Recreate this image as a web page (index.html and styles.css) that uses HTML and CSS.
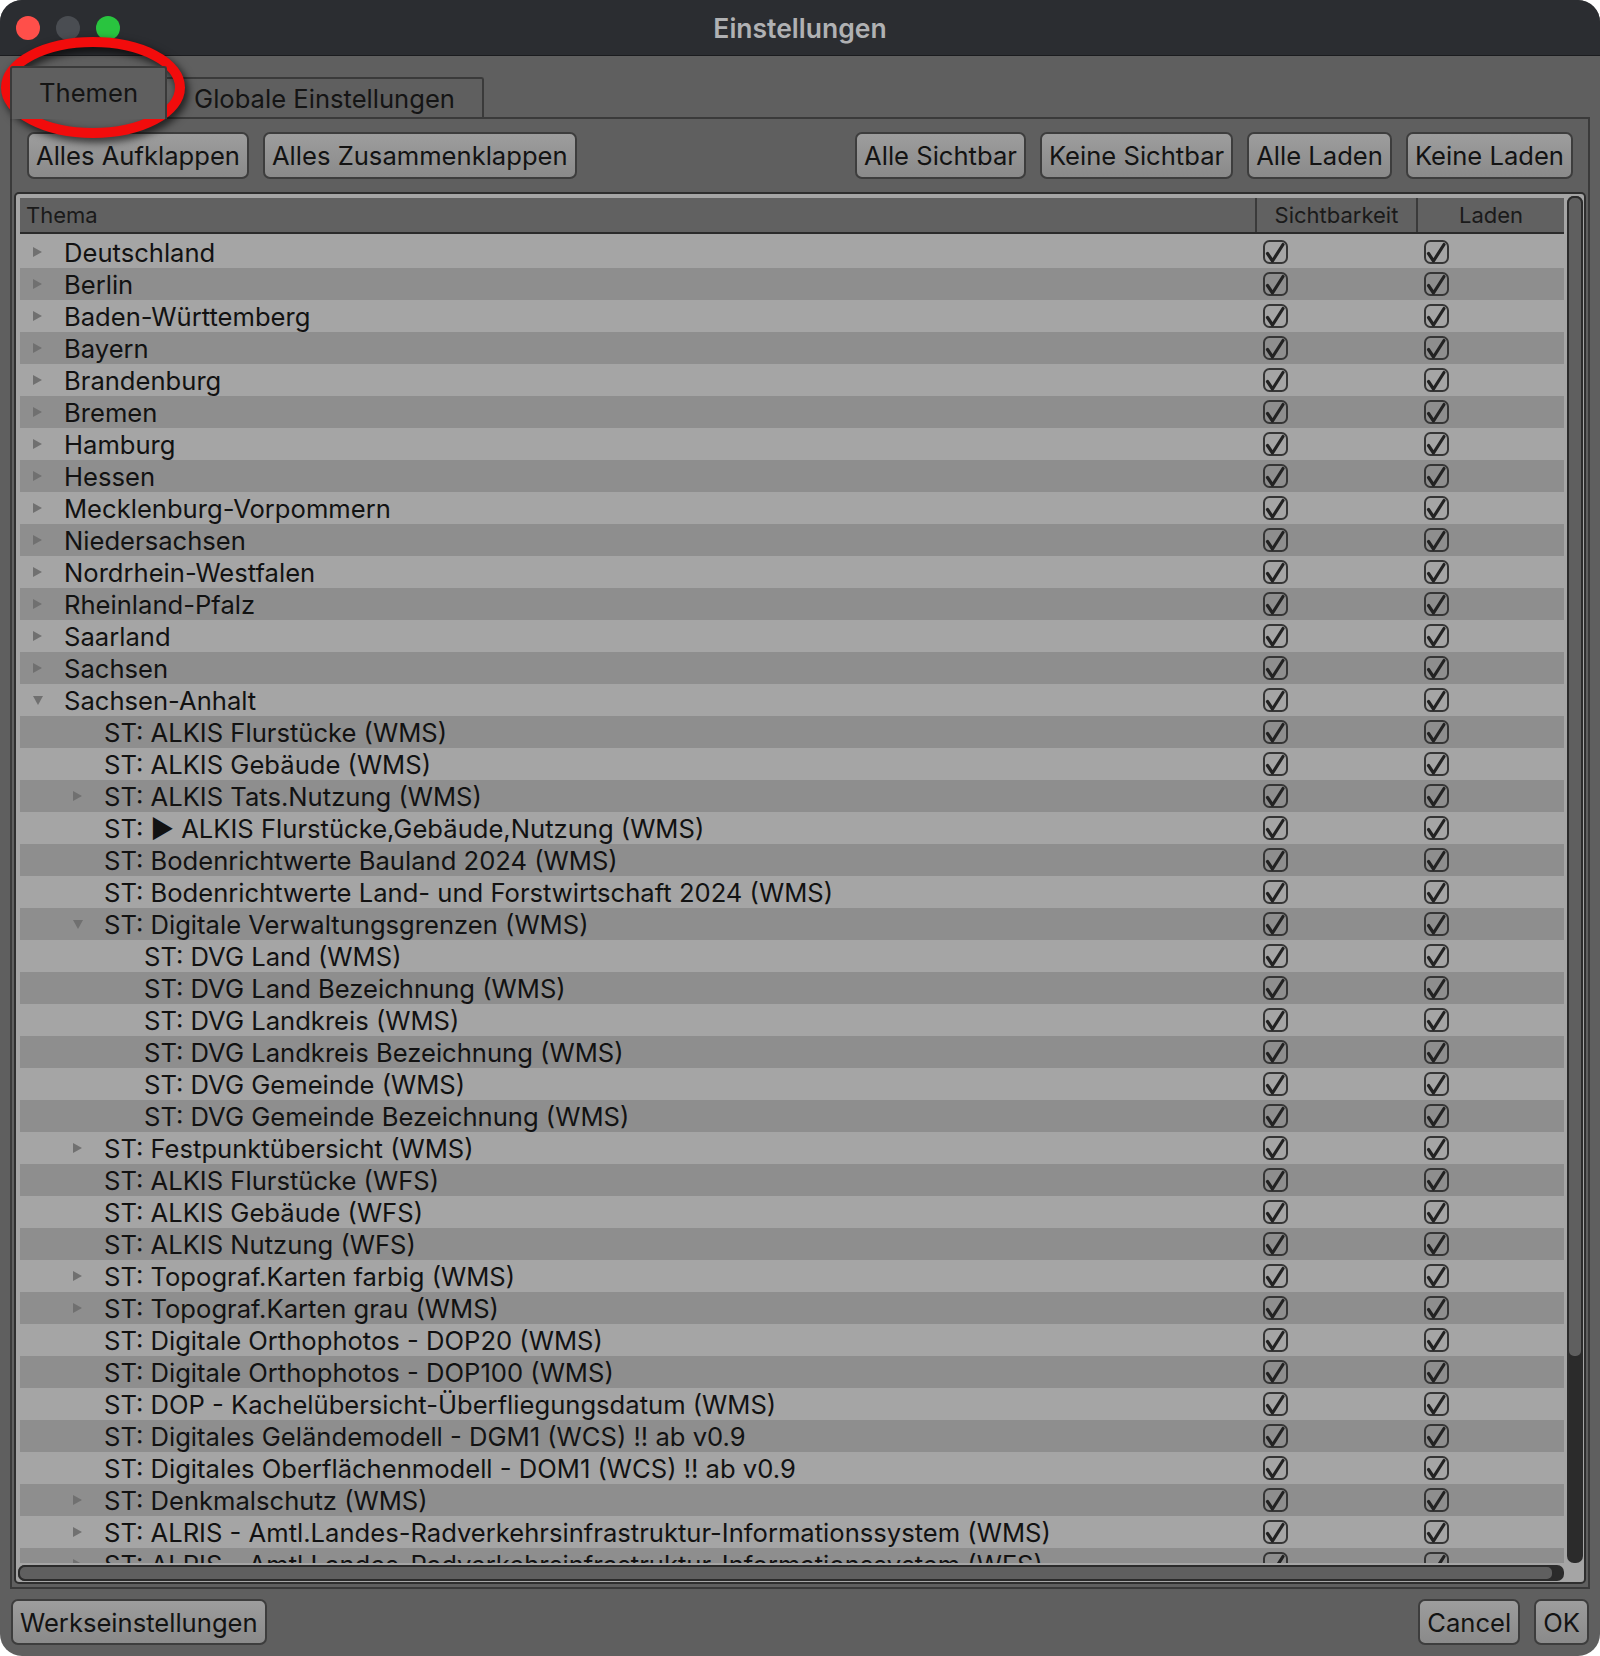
FILE: index.html
```html
<!DOCTYPE html>
<html lang="de">
<head>
    <meta charset="UTF-8">
    <title>Einstellungen</title>
    <link rel="stylesheet" href="styles.css">
</head>
<body>
    <svg width="0" height="0" class="defs">
        <symbol id="chk" viewBox="0 0 25 24">
            <rect x="1" y="1" width="23" height="22" rx="5.5" fill="none" stroke="#363636" stroke-width="2"/>
            <polyline points="4.5,13.5 9.5,21 20,4.5" fill="none" stroke="#222222" stroke-width="3.2" stroke-linecap="round" stroke-linejoin="round"/>
        </symbol>
    </svg>

    <div class="window">
        <div class="titlebar">
            <div class="lights">
                <span class="light red"></span>
                <span class="light grey"></span>
                <span class="light green"></span>
            </div>
            <div class="title">Einstellungen</div>
            <div></div>
        </div>

        <div class="tabbar">
            <div class="tab active">Themen</div>
            <div class="tab">Globale Einstellungen</div>
        </div>

        <div class="pane">
            <div class="toolbar">
                <div class="group">
                    <button class="btn">Alles Aufklappen</button>
                    <button class="btn">Alles Zusammenklappen</button>
                </div>
                <div class="group">
                    <button class="btn">Alle Sichtbar</button>
                    <button class="btn">Keine Sichtbar</button>
                    <button class="btn">Alle Laden</button>
                    <button class="btn">Keine Laden</button>
                </div>
            </div>

            <div class="tree-frame">
                <div class="tree">
                    <div class="tree-head">
                        <div class="head-name">Thema</div>
                        <div class="head-col">Sichtbarkeit</div>
                        <div class="head-col">Laden</div>
                    </div>
                    <div class="tree-body">
                        <div class="row"><div class="name lv0"><i class="tw closed"></i>Deutschland</div><div class="cell"><svg class="check"><use href="#chk"/></svg></div><div class="cell"><svg class="check"><use href="#chk"/></svg></div></div>
                        <div class="row"><div class="name lv0"><i class="tw closed"></i>Berlin</div><div class="cell"><svg class="check"><use href="#chk"/></svg></div><div class="cell"><svg class="check"><use href="#chk"/></svg></div></div>
                        <div class="row"><div class="name lv0"><i class="tw closed"></i>Baden-Württemberg</div><div class="cell"><svg class="check"><use href="#chk"/></svg></div><div class="cell"><svg class="check"><use href="#chk"/></svg></div></div>
                        <div class="row"><div class="name lv0"><i class="tw closed"></i>Bayern</div><div class="cell"><svg class="check"><use href="#chk"/></svg></div><div class="cell"><svg class="check"><use href="#chk"/></svg></div></div>
                        <div class="row"><div class="name lv0"><i class="tw closed"></i>Brandenburg</div><div class="cell"><svg class="check"><use href="#chk"/></svg></div><div class="cell"><svg class="check"><use href="#chk"/></svg></div></div>
                        <div class="row"><div class="name lv0"><i class="tw closed"></i>Bremen</div><div class="cell"><svg class="check"><use href="#chk"/></svg></div><div class="cell"><svg class="check"><use href="#chk"/></svg></div></div>
                        <div class="row"><div class="name lv0"><i class="tw closed"></i>Hamburg</div><div class="cell"><svg class="check"><use href="#chk"/></svg></div><div class="cell"><svg class="check"><use href="#chk"/></svg></div></div>
                        <div class="row"><div class="name lv0"><i class="tw closed"></i>Hessen</div><div class="cell"><svg class="check"><use href="#chk"/></svg></div><div class="cell"><svg class="check"><use href="#chk"/></svg></div></div>
                        <div class="row"><div class="name lv0"><i class="tw closed"></i>Mecklenburg-Vorpommern</div><div class="cell"><svg class="check"><use href="#chk"/></svg></div><div class="cell"><svg class="check"><use href="#chk"/></svg></div></div>
                        <div class="row"><div class="name lv0"><i class="tw closed"></i>Niedersachsen</div><div class="cell"><svg class="check"><use href="#chk"/></svg></div><div class="cell"><svg class="check"><use href="#chk"/></svg></div></div>
                        <div class="row"><div class="name lv0"><i class="tw closed"></i>Nordrhein-Westfalen</div><div class="cell"><svg class="check"><use href="#chk"/></svg></div><div class="cell"><svg class="check"><use href="#chk"/></svg></div></div>
                        <div class="row"><div class="name lv0"><i class="tw closed"></i>Rheinland-Pfalz</div><div class="cell"><svg class="check"><use href="#chk"/></svg></div><div class="cell"><svg class="check"><use href="#chk"/></svg></div></div>
                        <div class="row"><div class="name lv0"><i class="tw closed"></i>Saarland</div><div class="cell"><svg class="check"><use href="#chk"/></svg></div><div class="cell"><svg class="check"><use href="#chk"/></svg></div></div>
                        <div class="row"><div class="name lv0"><i class="tw closed"></i>Sachsen</div><div class="cell"><svg class="check"><use href="#chk"/></svg></div><div class="cell"><svg class="check"><use href="#chk"/></svg></div></div>
                        <div class="row"><div class="name lv0"><i class="tw open"></i>Sachsen-Anhalt</div><div class="cell"><svg class="check"><use href="#chk"/></svg></div><div class="cell"><svg class="check"><use href="#chk"/></svg></div></div>
                        <div class="row"><div class="name lv1"><i class="tw"></i>ST: ALKIS Flurstücke (WMS)</div><div class="cell"><svg class="check"><use href="#chk"/></svg></div><div class="cell"><svg class="check"><use href="#chk"/></svg></div></div>
                        <div class="row"><div class="name lv1"><i class="tw"></i>ST: ALKIS Gebäude (WMS)</div><div class="cell"><svg class="check"><use href="#chk"/></svg></div><div class="cell"><svg class="check"><use href="#chk"/></svg></div></div>
                        <div class="row"><div class="name lv1"><i class="tw closed"></i>ST: ALKIS Tats.Nutzung (WMS)</div><div class="cell"><svg class="check"><use href="#chk"/></svg></div><div class="cell"><svg class="check"><use href="#chk"/></svg></div></div>
                        <div class="row"><div class="name lv1"><i class="tw"></i>ST: ▶ ALKIS Flurstücke,Gebäude,Nutzung (WMS)</div><div class="cell"><svg class="check"><use href="#chk"/></svg></div><div class="cell"><svg class="check"><use href="#chk"/></svg></div></div>
                        <div class="row"><div class="name lv1"><i class="tw"></i>ST: Bodenrichtwerte Bauland 2024 (WMS)</div><div class="cell"><svg class="check"><use href="#chk"/></svg></div><div class="cell"><svg class="check"><use href="#chk"/></svg></div></div>
                        <div class="row"><div class="name lv1"><i class="tw"></i>ST: Bodenrichtwerte Land- und Forstwirtschaft 2024 (WMS)</div><div class="cell"><svg class="check"><use href="#chk"/></svg></div><div class="cell"><svg class="check"><use href="#chk"/></svg></div></div>
                        <div class="row"><div class="name lv1"><i class="tw open"></i>ST: Digitale Verwaltungsgrenzen (WMS)</div><div class="cell"><svg class="check"><use href="#chk"/></svg></div><div class="cell"><svg class="check"><use href="#chk"/></svg></div></div>
                        <div class="row"><div class="name lv2"><i class="tw"></i>ST: DVG Land (WMS)</div><div class="cell"><svg class="check"><use href="#chk"/></svg></div><div class="cell"><svg class="check"><use href="#chk"/></svg></div></div>
                        <div class="row"><div class="name lv2"><i class="tw"></i>ST: DVG Land Bezeichnung (WMS)</div><div class="cell"><svg class="check"><use href="#chk"/></svg></div><div class="cell"><svg class="check"><use href="#chk"/></svg></div></div>
                        <div class="row"><div class="name lv2"><i class="tw"></i>ST: DVG Landkreis (WMS)</div><div class="cell"><svg class="check"><use href="#chk"/></svg></div><div class="cell"><svg class="check"><use href="#chk"/></svg></div></div>
                        <div class="row"><div class="name lv2"><i class="tw"></i>ST: DVG Landkreis Bezeichnung (WMS)</div><div class="cell"><svg class="check"><use href="#chk"/></svg></div><div class="cell"><svg class="check"><use href="#chk"/></svg></div></div>
                        <div class="row"><div class="name lv2"><i class="tw"></i>ST: DVG Gemeinde (WMS)</div><div class="cell"><svg class="check"><use href="#chk"/></svg></div><div class="cell"><svg class="check"><use href="#chk"/></svg></div></div>
                        <div class="row"><div class="name lv2"><i class="tw"></i>ST: DVG Gemeinde Bezeichnung (WMS)</div><div class="cell"><svg class="check"><use href="#chk"/></svg></div><div class="cell"><svg class="check"><use href="#chk"/></svg></div></div>
                        <div class="row"><div class="name lv1"><i class="tw closed"></i>ST: Festpunktübersicht (WMS)</div><div class="cell"><svg class="check"><use href="#chk"/></svg></div><div class="cell"><svg class="check"><use href="#chk"/></svg></div></div>
                        <div class="row"><div class="name lv1"><i class="tw"></i>ST: ALKIS Flurstücke (WFS)</div><div class="cell"><svg class="check"><use href="#chk"/></svg></div><div class="cell"><svg class="check"><use href="#chk"/></svg></div></div>
                        <div class="row"><div class="name lv1"><i class="tw"></i>ST: ALKIS Gebäude (WFS)</div><div class="cell"><svg class="check"><use href="#chk"/></svg></div><div class="cell"><svg class="check"><use href="#chk"/></svg></div></div>
                        <div class="row"><div class="name lv1"><i class="tw"></i>ST: ALKIS Nutzung (WFS)</div><div class="cell"><svg class="check"><use href="#chk"/></svg></div><div class="cell"><svg class="check"><use href="#chk"/></svg></div></div>
                        <div class="row"><div class="name lv1"><i class="tw closed"></i>ST: Topograf.Karten farbig (WMS)</div><div class="cell"><svg class="check"><use href="#chk"/></svg></div><div class="cell"><svg class="check"><use href="#chk"/></svg></div></div>
                        <div class="row"><div class="name lv1"><i class="tw closed"></i>ST: Topograf.Karten grau (WMS)</div><div class="cell"><svg class="check"><use href="#chk"/></svg></div><div class="cell"><svg class="check"><use href="#chk"/></svg></div></div>
                        <div class="row"><div class="name lv1"><i class="tw"></i>ST: Digitale Orthophotos - DOP20 (WMS)</div><div class="cell"><svg class="check"><use href="#chk"/></svg></div><div class="cell"><svg class="check"><use href="#chk"/></svg></div></div>
                        <div class="row"><div class="name lv1"><i class="tw"></i>ST: Digitale Orthophotos - DOP100 (WMS)</div><div class="cell"><svg class="check"><use href="#chk"/></svg></div><div class="cell"><svg class="check"><use href="#chk"/></svg></div></div>
                        <div class="row"><div class="name lv1"><i class="tw"></i>ST: DOP - Kachelübersicht-Überfliegungsdatum (WMS)</div><div class="cell"><svg class="check"><use href="#chk"/></svg></div><div class="cell"><svg class="check"><use href="#chk"/></svg></div></div>
                        <div class="row"><div class="name lv1"><i class="tw"></i>ST: Digitales Geländemodell - DGM1 (WCS) !! ab v0.9</div><div class="cell"><svg class="check"><use href="#chk"/></svg></div><div class="cell"><svg class="check"><use href="#chk"/></svg></div></div>
                        <div class="row"><div class="name lv1"><i class="tw"></i>ST: Digitales Oberflächenmodell - DOM1 (WCS) !! ab v0.9</div><div class="cell"><svg class="check"><use href="#chk"/></svg></div><div class="cell"><svg class="check"><use href="#chk"/></svg></div></div>
                        <div class="row"><div class="name lv1"><i class="tw closed"></i>ST: Denkmalschutz (WMS)</div><div class="cell"><svg class="check"><use href="#chk"/></svg></div><div class="cell"><svg class="check"><use href="#chk"/></svg></div></div>
                        <div class="row"><div class="name lv1"><i class="tw closed"></i>ST: ALRIS - Amtl.Landes-Radverkehrsinfrastruktur-Informationssystem (WMS)</div><div class="cell"><svg class="check"><use href="#chk"/></svg></div><div class="cell"><svg class="check"><use href="#chk"/></svg></div></div>
                        <div class="row"><div class="name lv1"><i class="tw closed"></i>ST: ALRIS - Amtl.Landes-Radverkehrsinfrastruktur-Informationssystem (WFS)</div><div class="cell"><svg class="check"><use href="#chk"/></svg></div><div class="cell"><svg class="check"><use href="#chk"/></svg></div></div>
                    </div>
                </div>
                <div class="vscroll"><div class="thumb"></div></div>
                <div class="hscroll"><div class="thumb"></div></div>
                <div class="corner"></div>
            </div>
        </div>

        <div class="footer">
            <button class="btn">Werkseinstellungen</button>
            <div class="group">
                <button class="btn">Cancel</button>
                <button class="btn">OK</button>
            </div>
        </div>

        <!-- red marker drawn over the first tab -->
        <svg class="marker" width="196" height="112" viewBox="0 0 196 112">
            <ellipse cx="93" cy="54.5" rx="87" ry="45.5" fill="none" stroke="#f20c0c" stroke-width="10"/>
        </svg>
    </div>
</body>
</html>
```

FILE: styles.css
```css
/* General reset */
* {
    margin: 0;
    padding: 0;
    box-sizing: border-box;
}

body {
    font-family: Inter, "Liberation Sans", sans-serif;
    background-color: #ffffff;
}

.defs {
    position: absolute;
}

/* Window */
.window {
    position: relative;
    width: 1600px;
    height: 1656px;
    background-color: #5f5f5f;
    border-radius: 22px;
    overflow: hidden;
    display: flex;
    flex-direction: column;
}

/* Title bar */
.titlebar {
    flex: none;
    height: 56px;
    background-color: #2b2d31;
    border-bottom: 1px solid #1b1c1f;
    display: grid;
    grid-template-columns: 1fr auto 1fr;
    align-items: center;
}

.lights {
    display: flex;
    gap: 16px;
    margin-left: 16px;
}

.light {
    width: 24px;
    height: 24px;
    border-radius: 50%;
}

.light.red { background-color: #ff4f4a; }
.light.grey { background-color: #4a4d52; }
.light.green { background-color: #29c43f; }

.title {
    color: #b0b1b3;
    font-size: 26.5px;
    font-weight: 600;
}

/* Tabs */
.tabbar {
    flex: none;
    height: 61px;
    display: flex;
    align-items: flex-end;
    padding-left: 10px;
}

.tab {
    height: 40px;
    padding: 0 27px;
    display: flex;
    align-items: center;
    font-size: 25.6px;
    color: #141414;
    border: 2px solid #3a3a3a;
    border-left: none;
    border-bottom: none;
    border-radius: 0 3px 0 0;
}

.tab.active {
    position: relative;
    z-index: 1;
    height: 53px;
    margin-bottom: -2px;
    padding-bottom: 2px;
    border-left: 2px solid #3a3a3a;
    border-radius: 3px 3px 0 0;
    background-color: #5f5f5f;
}

/* Tab pane */
.pane {
    flex: 1;
    min-height: 0;
    margin: 0 10px;
    border: 2px solid #3a3a3a;
    padding: 13px 2px 3px;
    display: flex;
    flex-direction: column;
}

.toolbar {
    display: flex;
    justify-content: space-between;
    padding: 0 13px;
}

.group {
    display: flex;
    gap: 14px;
}

.btn {
    height: 47px;
    padding: 0 7px;
    font-family: Inter, "Liberation Sans", sans-serif;
    font-size: 25.6px;
    color: #131313;
    background: linear-gradient(#9d9d9d, #8a8a8a);
    border: 2px solid #3d3d3d;
    border-radius: 7px;
}

/* Tree view */
.tree-frame {
    flex: 1;
    min-height: 0;
    margin-top: 13px;
    display: grid;
    grid-template-columns: minmax(0, 1fr) 16px;
    grid-template-rows: minmax(0, 1fr) 16px;
    column-gap: 3px;
    row-gap: 2px;
    padding: 4px 1px 1px 4px;
    background-color: #a5a5a5;
    border: 2px solid #2e2e2e;
    border-radius: 5px;
}

.tree {
    overflow: hidden;
    display: flex;
    flex-direction: column;
}

.tree-head {
    flex: none;
    height: 36px;
    display: grid;
    grid-template-columns: minmax(0, 1fr) 161px 148px;
    background-color: #616161;
    border-bottom: 2px solid #2b2b2b;
    font-size: 22px;
    color: #1a1a1a;
}

.head-name {
    display: flex;
    align-items: center;
    padding-left: 6px;
}

.head-col {
    display: flex;
    align-items: center;
    justify-content: center;
    border-left: 2px solid #3a3a3a;
}

.tree-body {
    padding-top: 2px;
    overflow: hidden;
}

.row {
    height: 32px;
    display: grid;
    grid-template-columns: minmax(0, 1fr) 161px 148px;
    align-items: center;
}

.row:nth-child(even) {
    background-color: #8e8e8e;
}

.name {
    display: flex;
    align-items: center;
    font-size: 25.6px;
    color: #121212;
    white-space: nowrap;
}

.lv0 { padding-left: 13px; }
.lv1 { padding-left: 53px; }
.lv2 { padding-left: 93px; }

.tw {
    flex: none;
    width: 31px;
}

.tw.closed::before {
    content: "";
    display: block;
    width: 0;
    height: 0;
    border-left: 9px solid #707070;
    border-top: 5px solid transparent;
    border-bottom: 5px solid transparent;
}

.tw.open::before {
    content: "";
    display: block;
    width: 0;
    height: 0;
    border-top: 9px solid #707070;
    border-left: 5px solid transparent;
    border-right: 5px solid transparent;
}

.cell {
    display: flex;
    padding-left: 8px;
}

.check {
    width: 25px;
    height: 24px;
}

/* Scroll bars */
.vscroll {
    margin-top: -2px;
    background-color: #2b2b2b;
    border-radius: 7px;
}

.vscroll .thumb {
    height: 85%;
    background-color: #5f5f5f;
    border: 2px solid #2b2b2b;
    border-radius: 7px;
}

.hscroll {
    margin-left: -2px;
    background-color: #2b2b2b;
    border-radius: 7px;
}

.hscroll .thumb {
    width: calc(100% - 10px);
    height: 100%;
    background-color: #5f5f5f;
    border: 2px solid #2b2b2b;
    border-radius: 7px;
}

/* Footer buttons */
.footer {
    flex: none;
    display: flex;
    justify-content: space-between;
    padding: 10px 11px 11px;
}

.footer .btn {
    height: 46px;
}

/* Red marker round the first tab */
.marker {
    position: absolute;
    left: 0;
    top: 33px;
    filter: drop-shadow(3px 4px 4px rgba(0, 0, 0, 0.75));
}
```
